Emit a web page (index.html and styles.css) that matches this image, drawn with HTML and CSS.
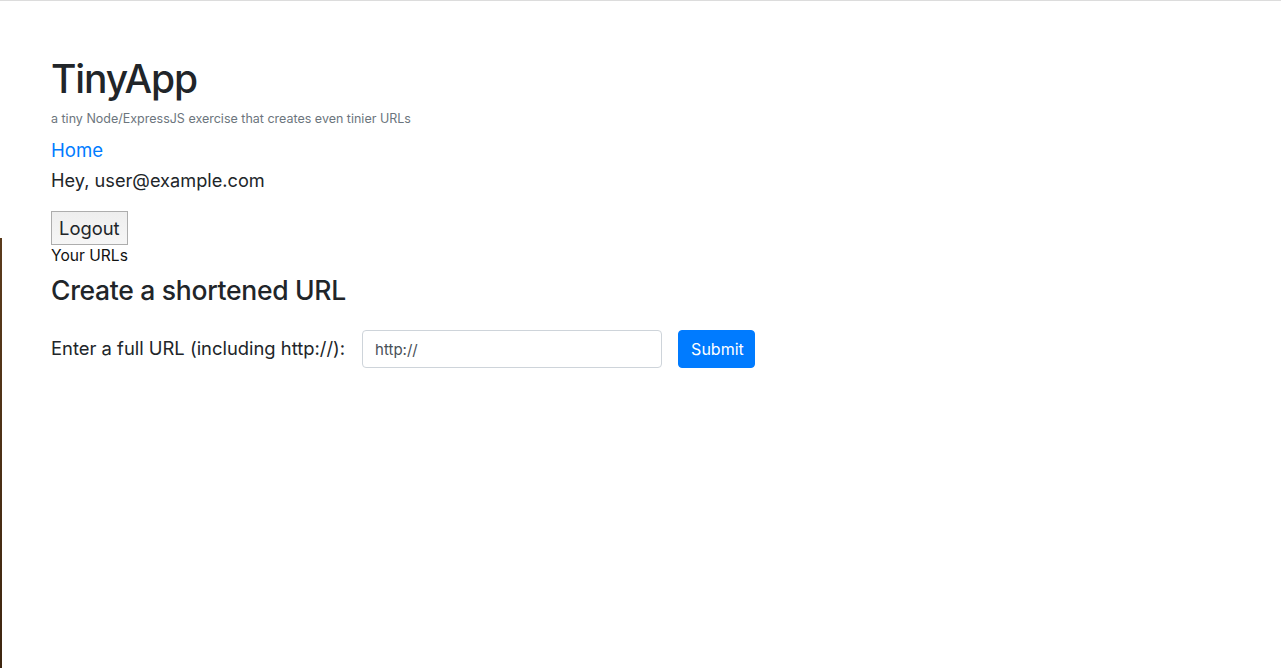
FILE: index.html
```html
<!DOCTYPE html>
<html lang="en">
<head>
<meta charset="utf-8">
<title>TinyApp</title>
<link rel="stylesheet" href="styles.css">
</head>
<body>
<div class="page">
  <header class="masthead">
    <h1 class="title">TinyApp</h1>
    <small class="tagline">a tiny Node/ExpressJS exercise that creates even tinier URLs</small>
  </header>
  <nav class="nav">
    <a class="nav-home" href="#">Home</a>
    <span class="greeting">Hey, user@example.com</span>
    <form class="logout-form">
      <button type="button" class="logout">Logout</button>
    </form>
    <a class="your-urls" href="#">Your URLs</a>
  </nav>
  <main class="main">
    <h3 class="heading">Create a shortened URL</h3>
    <form class="url-form">
      <label class="url-label" for="longURL">Enter a full URL (including http://):</label>
      <input class="url-input" id="longURL" type="text" value="http://">
      <button type="button" class="btn-submit">Submit</button>
    </form>
  </main>
</div>
</body>
</html>
```

FILE: styles.css
```css
html, body {
  margin: 0;
  padding: 0;
  height: 100%;
}

body {
  font-family: Inter, "Liberation Sans", Arial, sans-serif;
  font-size: 16px;
  line-height: 1.5;
  color: #212529;
  background: #fff;
  border-top: 1px solid #dcdcdc;
  box-sizing: border-box;
  position: relative;
  overflow: hidden;
}

body::before {
  content: "";
  position: fixed;
  left: 0;
  top: 238px;
  bottom: 0;
  width: 2px;
  background: linear-gradient(#5b3b1c, #3e2610);
}

.page {
  padding: 54px 51px 0 51px;
}

.masthead {
  display: flex;
  flex-direction: column;
}

.title {
  margin: 0;
  font-size: 39px;
  font-weight: 500;
  line-height: 48px;
  color: #212529;
  letter-spacing: -1.1px;
}

.tagline {
  margin-top: 7px;
  font-size: 12.5px;
  line-height: 18px;
  color: #6c757d;
}

.nav {
  display: flex;
  flex-direction: column;
  align-items: flex-start;
  margin-top: 7px;
}

.nav-home {
  font-size: 18.6px;
  line-height: 30px;
  color: #007bff;
  text-decoration: none;
}

.greeting {
  font-size: 18.2px;
  line-height: 30px;
}

.logout-form {
  margin: 16px 0 0 0;
}

.logout {
  font-family: inherit;
  font-size: 18.4px;
  line-height: 24px;
  height: 34px;
  padding: 4px 7px;
  color: #212529;
  background: linear-gradient(#eeeeee, #f6f6f6);
  border: 1px solid #adadad;
  border-radius: 0;
}

.your-urls {
  margin-top: 2px;
  font-size: 15.6px;
  line-height: 18px;
  color: #111;
  text-decoration: none;
}

.main {
  margin-top: 9px;
}

.heading {
  margin: 0;
  font-size: 26.5px;
  font-weight: 500;
  line-height: 33px;
  letter-spacing: -0.3px;
}

.url-form {
  display: flex;
  align-items: center;
  margin-top: 23px;
}

.url-label {
  font-size: 18.4px;
  margin-right: 17px;
}

.url-input {
  box-sizing: border-box;
  width: 300px;
  height: 38px;
  padding: 6px 12px;
  font-family: inherit;
  font-size: 15px;
  color: #495057;
  background: #fff;
  border: 1px solid #ced4da;
  border-radius: 4px;
  margin-right: 16px;
}

.btn-submit {
  box-sizing: border-box;
  height: 38px;
  width: 77px;
  padding: 6px 12px;
  font-family: inherit;
  font-size: 16px;
  color: #fff;
  background: #007bff;
  border: 1px solid #007bff;
  border-radius: 4px;
}
```
